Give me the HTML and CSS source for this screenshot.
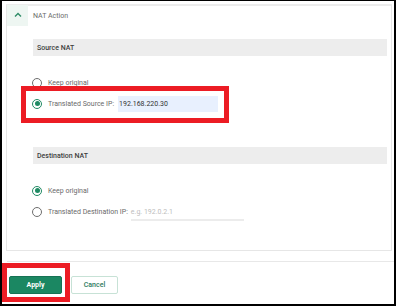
FILE: index.html
```html
<!DOCTYPE html>
<html>
<head>
<meta charset="utf-8">
<link rel="stylesheet" href="styles.css">
</head>
<body>
<div class="frame">
  <div class="card">
    <div class="card-head">
      <div class="chev">
        <svg width="8" height="6" viewBox="0 0 8 6"><path d="M1 4.5 L4 1.5 L7 4.5" fill="none" stroke="#2e8b66" stroke-width="1.4"/></svg>
      </div>
      <span class="card-title">NAT Action</span>
    </div>
    <div class="card-body">
      <div class="sec-head">Source NAT</div>
      <div class="radios">
        <div class="row"><span class="radio"></span><span class="lbl">Keep original</span></div>
        <div class="row"><span class="radio on"></span><span class="lbl">Translated Source IP:</span><span class="ip-filled">192.168.220.30</span></div>
      </div>
      <div class="sec-head sec-dest">Destination NAT</div>
      <div class="radios">
        <div class="row"><span class="radio on"></span><span class="lbl">Keep original</span></div>
        <div class="row"><span class="radio"></span><span class="lbl">Translated Destination IP:</span><span class="ip-empty">e.g. 192.0.2.1</span></div>
      </div>
    </div>
  </div>
  <div class="footer">
    <button class="btn btn-apply">Apply</button>
    <button class="btn btn-cancel">Cancel</button>
  </div>
  <div class="mark mark-ip"></div>
  <div class="mark mark-apply"></div>
</div>
</body>
</html>
```

FILE: styles.css
```css
html, body {
  margin: 0;
  padding: 0;
  background: #fff;
}
body {
  font-family: Roboto, "Liberation Sans", sans-serif;
  font-size: 7px;
  color: #666;
}
.frame {
  position: relative;
  width: 396px;
  height: 306px;
  box-sizing: border-box;
  border: 2px solid #000;
  border-top-width: 1px;
  overflow: hidden;
}
.card {
  margin: 3px 2px 0 4px;
  height: 247px;
  box-sizing: border-box;
  border: 1px solid #e6e6e6;
  border-top: 2px solid #ececec;
  background: #fff;
}
.card-head {
  display: flex;
  align-items: center;
  height: 21px;
  margin-top: -1px;
}
.chev {
  width: 21px;
  height: 21px;
  background: #eef6f2;
  display: flex;
  align-items: center;
  justify-content: center;
}
.chev svg { display: block; margin-top: -1px; }
.card-title {
  margin-left: 5px;
  color: #6b6b6b;
}
.card-body {
  padding: 0 4px 0 26px;
}
.sec-head {
  margin-top: 13px;
  height: 17px;
  background: #ededed;
  display: flex;
  align-items: center;
  padding-left: 4px;
  color: #3d3d3d;
  font-weight: 500;
}
.sec-dest {
  margin-top: 33px;
}
.radios {
  margin-top: 16px;
}
.row {
  height: 21px;
  display: flex;
  align-items: center;
}
.radio {
  width: 10px;
  height: 10px;
  box-sizing: border-box;
  border: 1px solid #6e6e6e;
  border-radius: 50%;
  margin-left: -1px;
  margin-right: 6px;
  position: relative;
  flex: none;
}
.radio.on {
  border-color: #1f8a63;
}
.radio.on::after {
  content: "";
  position: absolute;
  left: 1.5px;
  top: 1.5px;
  width: 5px;
  height: 5px;
  border-radius: 50%;
  background: #1f8a63;
}
.lbl {
  color: #6a6a6a;
}
.ip-filled {
  margin-left: 4px;
  width: 100px;
  height: 16px;
  box-sizing: border-box;
  background: #e8f0fe;
  color: #333;
  padding-left: 1px;
  display: flex;
  align-items: center;
}
.ip-empty {
  margin-left: 3px;
  width: 113px;
  height: 16px;
  box-sizing: border-box;
  border-bottom: 2px solid #ececec;
  color: #bdbdbd;
  display: flex;
  align-items: center;
  margin-top: 3px;
}
.footer {
  margin: 10px 0 0 5px;
  border-top: 1px solid #e8e8e8;
  padding: 14px 0 0 2px;
  display: flex;
  gap: 9px;
}
.btn {
  display: block;
  flex: none;
  box-sizing: border-box;
  height: 18px;
  font-family: Roboto, "Liberation Sans", sans-serif;
  font-size: 7px;
  border-radius: 2px;
  padding: 0;
  margin: 0;
  cursor: pointer;
}
.btn-apply {
  width: 53px;
  background: #1b8762;
  border: 1px solid #167254;
  color: #fff;
  font-weight: 700;
}
.btn-cancel {
  width: 47px;
  background: #fff;
  border: 1px solid #c7e2d6;
  color: #2c7a5e;
  font-weight: 500;
}
.mark {
  position: absolute;
  box-sizing: border-box;
  border: 5px solid #ec1c24;
}
.mark-ip {
  left: 19px;
  top: 85px;
  width: 208px;
  height: 37px;
}
.mark-apply {
  left: 0;
  top: 262px;
  width: 68px;
  height: 39px;
}
```
